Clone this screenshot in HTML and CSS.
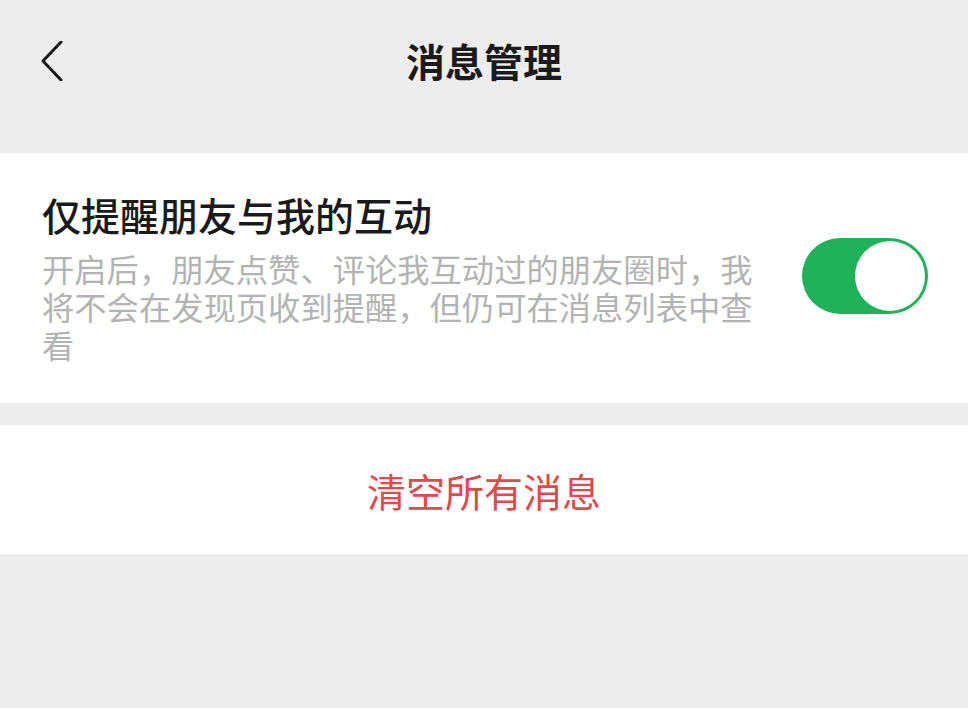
FILE: index.html
```html
<!DOCTYPE html>
<html lang="zh-CN">
<head>
    <meta charset="UTF-8">
    <meta name="viewport" content="width=device-width, initial-scale=1.0">
    <title>消息管理</title>
    <link rel="stylesheet" href="styles.css">
</head>
<body>
    <div class="nav">
        <svg class="back" width="24" height="40" viewBox="0 0 24 40">
            <path d="M20 1 L2 20 L20 39" fill="none" stroke="#1a1a1a" stroke-width="3" stroke-linecap="round" stroke-linejoin="round"/>
        </svg>
        <h1 class="nav-title">消息管理</h1>
    </div>

    <div class="card setting">
        <div class="setting-text">
            <div class="setting-title">仅提醒朋友与我的互动</div>
            <div class="setting-desc">开启后，朋友点赞、评论我互动过的朋友圈时，我将不会在发现页收到提醒，但仍可在消息列表中查看</div>
        </div>
        <div class="switch on">
            <div class="knob"></div>
        </div>
    </div>

    <div class="card action">
        <span class="danger">清空所有消息</span>
    </div>
</body>
</html>
```

FILE: styles.css
```css
body {
    margin: 0;
    background-color: #ededed;
    font-family: "Noto Sans CJK SC", "Noto Sans", sans-serif;
    width: 968px;
    height: 708px;
    overflow: hidden;
}
.nav {
    height: 153px;
    display: flex;
    align-items: flex-start;
    justify-content: center;
    position: relative;
}
.back {
    position: absolute;
    left: 41px;
    top: 41px;
}
.nav-title {
    margin: 34px 0 0 0;
    font-size: 39px;
    font-weight: 700;
    line-height: 52px;
    color: #1a1a1a;
}
.card {
    background-color: #fff;
}
.setting {
    display: flex;
    align-items: center;
    justify-content: space-between;
    padding: 36px 40px 40px 42px;
    height: 174px;
}
.setting-text {
    width: 720px;
}
.setting-title {
    font-size: 39px;
    font-weight: 500;
    line-height: 50px;
    color: #1a1a1a;
}
.setting-desc {
    margin-top: 10px;
    font-size: 32.3px;
    line-height: 38px;
    color: #b3b3b3;
}
.switch {
    width: 126px;
    height: 76px;
    border-radius: 38px;
    background-color: #1fb25a;
    display: flex;
    align-items: center;
    justify-content: flex-end;
    padding: 0 3px;
    box-sizing: border-box;
}
.knob {
    width: 70px;
    height: 70px;
    border-radius: 50%;
    background-color: #fff;
}
.action {
    margin-top: 22px;
    height: 129px;
    display: flex;
    align-items: center;
    justify-content: center;
}
.danger {
    font-size: 39px;
    color: #e04a4a;
    line-height: 50px;
}
```
